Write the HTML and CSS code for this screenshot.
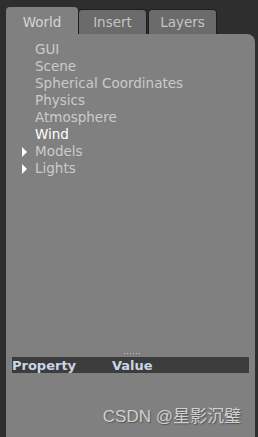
FILE: index.html
```html
<!DOCTYPE html>
<html lang="en">
<head>
    <meta charset="UTF-8">
    <title>World</title>
    <link rel="stylesheet" href="styles.css">
</head>
<body>
    <div class="tabs">
        <div class="tab active">World</div>
        <div class="tab">Insert</div>
        <div class="tab">Layers</div>
    </div>
    <div class="panel">
        <ul class="tree">
            <li>GUI</li>
            <li>Scene</li>
            <li>Spherical Coordinates</li>
            <li>Physics</li>
            <li>Atmosphere</li>
            <li class="selected">Wind</li>
            <li class="branch"><span class="arrow"></span>Models</li>
            <li class="branch"><span class="arrow"></span>Lights</li>
        </ul>
        <div class="splitter"><span class="grip"></span></div>
        <div class="props-head">
            <span class="col-prop">Property</span>
            <span class="col-value">Value</span>
        </div>
        <div class="props-body">
            <div class="watermark">CSDN @星影沉璧</div>
        </div>
    </div>
</body>
</html>
```

FILE: styles.css
```css
body {
    margin: 0;
    width: 258px;
    height: 437px;
    background-color: #2e2e2e;
    font-family: "DejaVu Sans", "Noto Sans CJK SC", sans-serif;
    font-size: 13.5px;
    overflow: hidden;
}
.tabs {
    display: flex;
    align-items: flex-end;
    height: 34px;
    padding-left: 6px;
}
.tab {
    width: 69px;
    height: 25px;
    line-height: 25px;
    text-align: center;
    background-color: #6b6b6b;
    color: #c4c4c4;
    border: 1px solid #1e1e1e;
    border-bottom: none;
    border-radius: 4px 4px 0 0;
    margin-right: 1px;
    box-sizing: border-box;
}
.tab.active {
    width: 72px;
    height: 27px;
    line-height: 28px;
    background-color: #808080;
    border-color: #808080;
    margin-right: 0;
    color: #d6d6d6;
}
.panel {
    margin-left: 6px;
    width: 249px;
    height: 403px;
    background-color: #808080;
    border-radius: 0 8px 0 0;
    display: flex;
    flex-direction: column;
}
.tree {
    list-style: none;
    margin: 0;
    padding: 7px 0 0 29px;
    flex: 1;
}
.tree li {
    height: 17px;
    line-height: 17px;
    color: #cbcbcb;
    position: relative;
}
.tree li.selected {
    color: #ffffff;
}
.arrow {
    position: absolute;
    left: -13px;
    top: 4px;
    width: 0;
    height: 0;
    border-top: 5px solid transparent;
    border-bottom: 5px solid transparent;
    border-left: 5px solid #ffffff;
}
.splitter {
    height: 6px;
    display: flex;
    justify-content: center;
    align-items: flex-start;
}
.grip {
    margin-top: 2px;
    margin-left: 3px;
    width: 17px;
    height: 1px;
    background-image: repeating-linear-gradient(to right, #c0c0c0 0 1px, transparent 1px 3px);
}
.props-head {
    display: flex;
    margin: 0 6px;
    height: 16px;
    line-height: 17px;
    background-color: #3c3c3c;
    color: #c9d6e6;
    font-weight: bold;
    font-size: 13px;
}
.col-prop {
    width: 100px;
}
.props-body {
    height: 64px;
    position: relative;
}
.watermark {
    position: absolute;
    right: 14px;
    bottom: 10px;
    font-family: "Liberation Sans", "Noto Sans CJK SC", sans-serif;
    font-size: 17px;
    color: #d0d0d0;
    text-shadow: 1px 1px 1px #555555;
}
```
